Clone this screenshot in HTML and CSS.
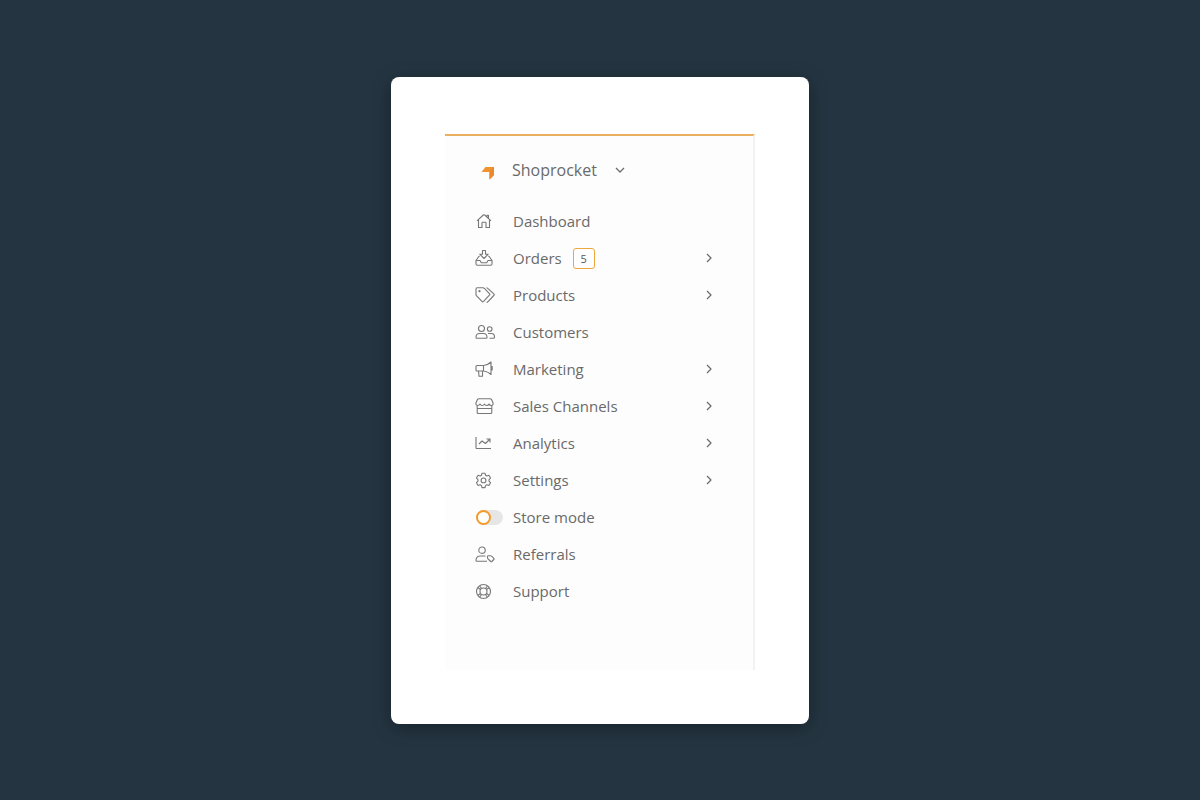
FILE: index.html
```html
<!DOCTYPE html>
<html lang="en">
<head>
    <meta charset="UTF-8">
    <meta name="viewport" content="width=device-width, initial-scale=1.0">
    <title>Shoprocket</title>
    <link rel="stylesheet" href="styles.css">
</head>
<body>
    <main class="card">
        <div class="sidebar">
            <button class="store-switch" type="button">
                <svg class="logo" viewBox="0 0 14 14"><path d="M4.500 1H13V9L8.500 13.500V6H.5z" fill="#f0922f"/><path d="M8.500 6L13 1V9L8.500 13.500z" fill="#e88a2c"/></svg>
                <span>Shoprocket</span>
                <svg class="chevron" viewBox="0 0 10 10"><path d="M1 3l4 4 4-4"/></svg>
            </button>

            <nav class="menu">
                <a class="menu-item" href="#">
                    <svg class="icon" viewBox="0 0 20 20"><path d="M2 9.800L8.300 4q.7-.6 1.400 0L16 9.800M13.500 7.300V4.200H12V6M3.500 9v7.500H7V12q0-.8.8-.8h2.400q.8 0 .8.800v4.500h3.500V9"/></svg>
                    <span>Dashboard</span>
                </a>
                <button class="menu-item" type="button">
                    <svg class="icon" viewBox="0 0 20 20"><path d="M7.500 2.500h3v3.700h2.700L9 10.500 4.800 6.200h2.700zM4.800 8.200H4L1 12.500V16q0 1.200 1.200 1.200h13.600Q17 17.200 17 16v-3.500l-3-4.300h-.8M1 12.500h4l1.300 2.200h5.400l1.300-2.200h4"/></svg>
                    <span>Orders</span>
                    <span class="badge">5</span>
                    <svg class="chevron" viewBox="0 0 10 10"><path d="M3 1l4 4-4 4"/></svg>
                </button>
                <button class="menu-item" type="button">
                    <svg class="icon" viewBox="0 0 20 20"><path d="M1 4Q1 2.800 2.200 2.800H8q.8 0 1.400.6l5 5.200q.8.8 0 1.600l-5.800 6.200q-.8.8-1.600 0l-5.400-5.600Q1 10.200 1 9.400zM11.500 2.800q.7 0 1.300.6l6 5.500q.8.800 0 1.600l-6.300 6.700h-1"/><circle cx="4.500" cy="6.200" r=".6"/></svg>
                    <span>Products</span>
                    <svg class="chevron" viewBox="0 0 10 10"><path d="M3 1l4 4-4 4"/></svg>
                </button>
                <a class="menu-item" href="#">
                    <svg class="icon" viewBox="0 0 20 20"><circle cx="6.500" cy="6.500" r="3"/><circle cx="14.700" cy="7" r="2.300"/><path d="M1 15.500c0-3 1.500-4 3.500-4h4c2 0 3.500 1 3.500 4q0 .7-.7.7H1.700Q1 16.200 1 15.500zM13 11.500h3.500c2 0 3 1.200 3 3.700q0 1-1 1h-4"/></svg>
                    <span>Customers</span>
                </a>
                <button class="menu-item" type="button">
                    <svg class="icon" viewBox="0 0 20 20"><path d="M2 6.500h6.500Q13 6 16 3v12.500Q13 12.500 8.500 12H2q-1 0-1-1V7.500q0-1 1-1zM8.500 6.500V12M3.500 12l.5 5.200h3.500V12M16 7.500h1.200V11H16"/></svg>
                    <span>Marketing</span>
                    <svg class="chevron" viewBox="0 0 10 10"><path d="M3 1l4 4-4 4"/></svg>
                </button>
                <button class="menu-item" type="button">
                    <svg class="icon" viewBox="0 0 20 20"><path d="M4 2.800h11q1 0 1.500.8l1.500 3.200q.5 2.700-1.500 2.700T14 8q-.6 1.500-2.200 1.500T9.500 8Q8.700 9.500 7.200 9.500T5 8Q4.200 9.500 2.700 9.500.5 9.500 1 6.800l1.500-3.200q.5-.8 1.500-.8zM2.200 9.500v7q0 1 1 1h12.600q1 0 1-1v-7M2.200 12.500h14.600"/></svg>
                    <span>Sales Channels</span>
                    <svg class="chevron" viewBox="0 0 10 10"><path d="M3 1l4 4-4 4"/></svg>
                </button>
                <button class="menu-item" type="button">
                    <svg class="icon" viewBox="0 0 20 20"><path d="M1 4v11q0 .5.5.5h14.500M4 11l3-3 3.500 2.500 4-4M11.500 6H15v3.500"/></svg>
                    <span>Analytics</span>
                    <svg class="chevron" viewBox="0 0 10 10"><path d="M3 1l4 4-4 4"/></svg>
                </button>
                <button class="menu-item" type="button">
                    <svg class="icon" viewBox="0 0 20 20"><path d="M7 3.200h3l.5 2 1.300.8 2.100-.7 1.600 2.800-1.500 1.500v1.600l1.500 1.500-1.600 2.800-2.100-.7-1.300.8-.5 2H7l-.5-2-1.300-.8-2.100.7-1.600-2.800 1.500-1.500V9.600L1.500 8.100l1.600-2.800 2.100.7 1.300-.8z"/><circle cx="8.500" cy="10.400" r="2.400"/></svg>
                    <span>Settings</span>
                    <svg class="chevron" viewBox="0 0 10 10"><path d="M3 1l4 4-4 4"/></svg>
                </button>
                <label class="menu-item">
                    <input class="toggle" type="checkbox">
                    <span>Store mode</span>
                </label>
                <a class="menu-item" href="#">
                    <svg class="icon" viewBox="0 0 20 20"><circle cx="7" cy="6.200" r="3.200"/><path d="M10.500 12H5.500Q1 12 1 16.500q0 .8.800.8h10.200M12.500 12.500q0-.8.8-.8h2.200q.6 0 1.100.5l2.200 2.100q.6.600 0 1.200l-1.900 2q-.6.600-1.200 0l-2.700-2.600q-.5-.5-.5-1.100z"/></svg>
                    <span>Referrals</span>
                </a>
                <a class="menu-item" href="#">
                    <svg class="icon" viewBox="0 0 20 20"><circle cx="8.500" cy="10.500" r="7"/><circle cx="8.500" cy="10.500" r="3.500"/><path d="M2.700 6.500l2.800 2M4.500 4.700l2 2.800M12.500 4.700l-2 2.800M14.300 6.500l-2.800 2M14.300 14.500l-2.800-2M12.500 16.300l-2-2.800M4.500 16.300l2-2.800M2.700 14.500l2.800-2"/></svg>
                    <span>Support</span>
                </a>
            </nav>
        </div>
    </main>
</body>
</html>
```

FILE: styles.css
```css
*,
*::before {
    margin: 0;
    padding: 0;
    box-sizing: border-box;
}

body {
    display: flex;
    align-items: center;
    justify-content: center;
    min-height: 100vh;
    background: #243541;
    color: #6a6a6a;
    font-family: 'Open Sans', sans-serif;
    font-size: 15px;
}

button {
    border: none;
    background: none;
    color: inherit;
    font: inherit;
    text-align: left;
    cursor: pointer;
}

.card {
    width: 100%;
    max-width: 418px;
    padding: 57px 54px 54px;
    background: #fff;
    border-radius: 8px;
    box-shadow: 0 4px 18px rgba(0, 0, 0, 0.35);
}

.sidebar {
    padding: 16px 39px 60px 30px;
    background: #fdfdfd;
    border-top: 2px solid #e9b15f;
    border-right: 2px solid #f2f2f2;
}

.store-switch {
    display: flex;
    align-items: center;
    height: 37px;
    padding-left: 6px;
    font-size: 16px;
}

.logo {
    width: 14px;
    height: 14px;
    margin: 6px 17px 0 0;
}

.store-switch .chevron {
    margin-left: 18px;
}

.menu {
    margin-top: 14px;
}

.menu-item {
    display: flex;
    align-items: center;
    width: 100%;
    height: 37px;
    color: inherit;
    text-decoration: none;
    cursor: pointer;
}

.icon {
    width: 20px;
    height: 20px;
    margin-right: 18px;
}

.icon,
.chevron {
    flex: none;
    fill: none;
    stroke: #777;
    stroke-width: 1.1;
    stroke-linejoin: round;
}

.chevron {
    width: 10px;
    height: 10px;
    stroke: #6a6a6a;
    stroke-width: 1.2;
}

.menu-item .chevron {
    margin-left: auto;
}

.badge {
    width: 22px;
    margin-left: 11px;
    border: 1px solid #eda73c;
    border-radius: 3px;
    background: #fff;
    color: #555;
    font-size: 11px;
    line-height: 19px;
    text-align: center;
}

.toggle {
    appearance: none;
    display: flex;
    width: 27px;
    height: 15px;
    margin: 0 10px 0 1px;
    border-radius: 8px;
    background: #e6e6e6;
    cursor: pointer;
}

.toggle::before {
    content: '';
    width: 15px;
    height: 15px;
    border: 2px solid #f39a2b;
    border-radius: 50%;
    background: #fff;
}

.toggle:checked {
    justify-content: flex-end;
}
```
